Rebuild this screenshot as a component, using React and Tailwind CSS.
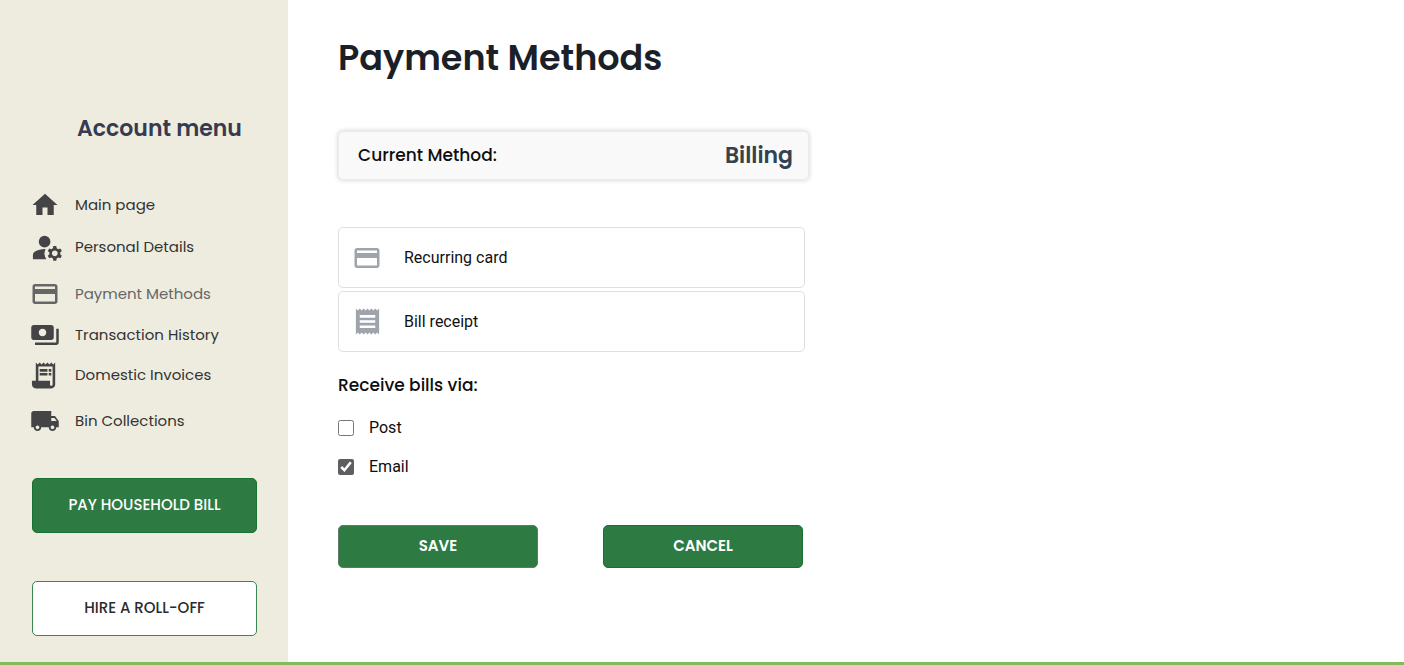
import {
  MdHome,
  MdManageAccounts,
  MdCreditCard,
  MdPayments,
  MdLocalShipping,
  MdReceipt,
} from "react-icons/md";

function InvoiceIcon({ size, ...props }) {
  return (
    <svg width={size} height={size} viewBox="1.5 0 24 24" fill="currentColor" {...props}>
      <path d="M19.5 3.5 18 2l-1.5 1.5L15 2l-1.5 1.5L12 2l-1.5 1.5L9 2 7.5 3.5 6 2v14H3v3c0 1.66 1.34 3 3 3h12c1.66 0 3-1.34 3-3V2l-1.5 1.5zM19 19c0 .55-.45 1-1 1s-1-.45-1-1v-3H8V5h11v14z" />
      <path d="M9 7h6v2H9zM16 7h2v2h-2zM9 10h6v2H9zM16 10h2v2h-2z" />
    </svg>
  );
}

const menu = [
  { label: "Main page", Icon: MdHome, size: 30, gap: "mt-0" },
  { label: "Personal Details", Icon: MdManageAccounts, size: 35, gap: "mt-[2px]" },
  { label: "Payment Methods", Icon: MdCreditCard, size: 30, gap: "mt-[7px]", current: true },
  { label: "Transaction History", Icon: MdPayments, size: 30, gap: "mt-[1px]" },
  { label: "Domestic Invoices", Icon: InvoiceIcon, size: 31, gap: "mt-0" },
  { label: "Bin Collections", Icon: MdLocalShipping, size: 30, gap: "mt-[6px]" },
];

const methods = [
  { label: "Recurring card", Icon: MdCreditCard, size: 30 },
  { label: "Bill receipt", Icon: MdReceipt, size: 31 },
];

function Sidebar() {
  return (
    <aside className="flex w-72 shrink-0 flex-col bg-[#eeecdf] pr-[31px] pl-8 pt-[111px] pb-[26px]">
      <h2 className="pl-[30px] text-center text-[22px] leading-9 font-semibold text-[#373b4f]">
        Account menu
      </h2>
      <nav className="mt-[38px] -ml-[2px]">
        <ul>
          {menu.map(({ label, Icon, size, gap, current }) => (
            <li key={label} className={gap}>
              <a
                href="#"
                aria-current={current ? "page" : undefined}
                className={`flex h-10 items-center gap-[15px] text-[15px] ${
                  current ? "text-[#666666]" : "text-[#333333]"
                }`}
              >
                <span
                  className={`flex w-[30px] shrink-0 ${
                    current ? "text-[#666666]" : "text-[#444446]"
                  }`}
                >
                  <Icon size={size} className="shrink-0" aria-hidden="true" />
                </span>
                {label}
              </a>
            </li>
          ))}
        </ul>
      </nav>
      <button
        type="button"
        className="mt-[37px] h-[55px] rounded-[5px] border border-[#18722f] bg-[#2d7a43] text-[15px] font-medium text-white"
      >
        PAY HOUSEHOLD BILL
      </button>
      <button
        type="button"
        className="mt-12 h-[55px] rounded-[5px] border border-[#3c8450] bg-white text-[15px] font-medium text-[#2b2b2f]"
      >
        HIRE A ROLL-OFF
      </button>
    </aside>
  );
}

export default function App() {
  return (
    <div className="flex min-h-screen border-b-[3px] border-[#84b95c] bg-white font-[Poppins,Inter,sans-serif]">
      <Sidebar />
      <main className="min-w-0 flex-1 px-[50px] pt-8 pb-8">
        <h1 className="text-[35px] leading-[52px] font-semibold text-[#1b1f27]">
          Payment Methods
        </h1>
        <form className="max-w-[471px]" onSubmit={(e) => e.preventDefault()}>
          <div className="mt-[47px] flex h-[49px] items-center justify-between rounded-[5px] border border-[#ececec] bg-[#f9f9f9] pr-[15px] pl-[19px] shadow-[0_0_5px_rgba(0,0,0,0.2)]">
            <span className="text-[17px] font-medium text-[#0e0e0e]">Current Method:</span>
            <span className="text-[22px] font-semibold text-[#34414f]">Billing</span>
          </div>
          <div className="mt-[47px] mr-1 flex flex-col gap-[3px]">
            {methods.map(({ label, Icon, size }) => (
              <button
                key={label}
                type="button"
                className="flex h-[61px] items-center gap-[22px] rounded-[5px] border border-[#dfdfe1] bg-white px-[13px] font-[Roboto,sans-serif] text-[16px] text-[#111114]"
              >
                <span className="flex w-[30px] text-[#9fa3aa]">
                  <Icon size={size} className="shrink-0" aria-hidden="true" />
                </span>
                {label}
              </button>
            ))}
          </div>
          <fieldset>
            <legend className="pt-5 text-[17px] leading-[26px] font-medium text-[#0e0e0e]">
              Receive bills via:
            </legend>
            <div className="mt-[10px] flex flex-col font-[Roboto,sans-serif] text-[16px] text-[#0e0e0e]">
              <label className="flex h-[39px] items-center gap-[15px]">
                <input type="checkbox" className="size-4 accent-[#5f5f63]" />
                Post
              </label>
              <label className="flex h-[39px] items-center gap-[15px]">
                <input type="checkbox" defaultChecked className="size-4 accent-[#5f5f63]" />
                Email
              </label>
            </div>
          </fieldset>
          <div className="mt-[39px] mr-[6px] flex justify-between">
            <button
              type="submit"
              className="h-[43px] w-[200px] rounded-[5px] border border-[#5d7a64] bg-[#2d7a43] text-[15px] font-semibold text-white"
            >
              SAVE
            </button>
            <button
              type="button"
              className="h-[43px] w-[200px] rounded-[5px] border border-[#18722f] bg-[#2d7a43] text-[15px] font-semibold text-white"
            >
              CANCEL
            </button>
          </div>
        </form>
      </main>
    </div>
  );
}
